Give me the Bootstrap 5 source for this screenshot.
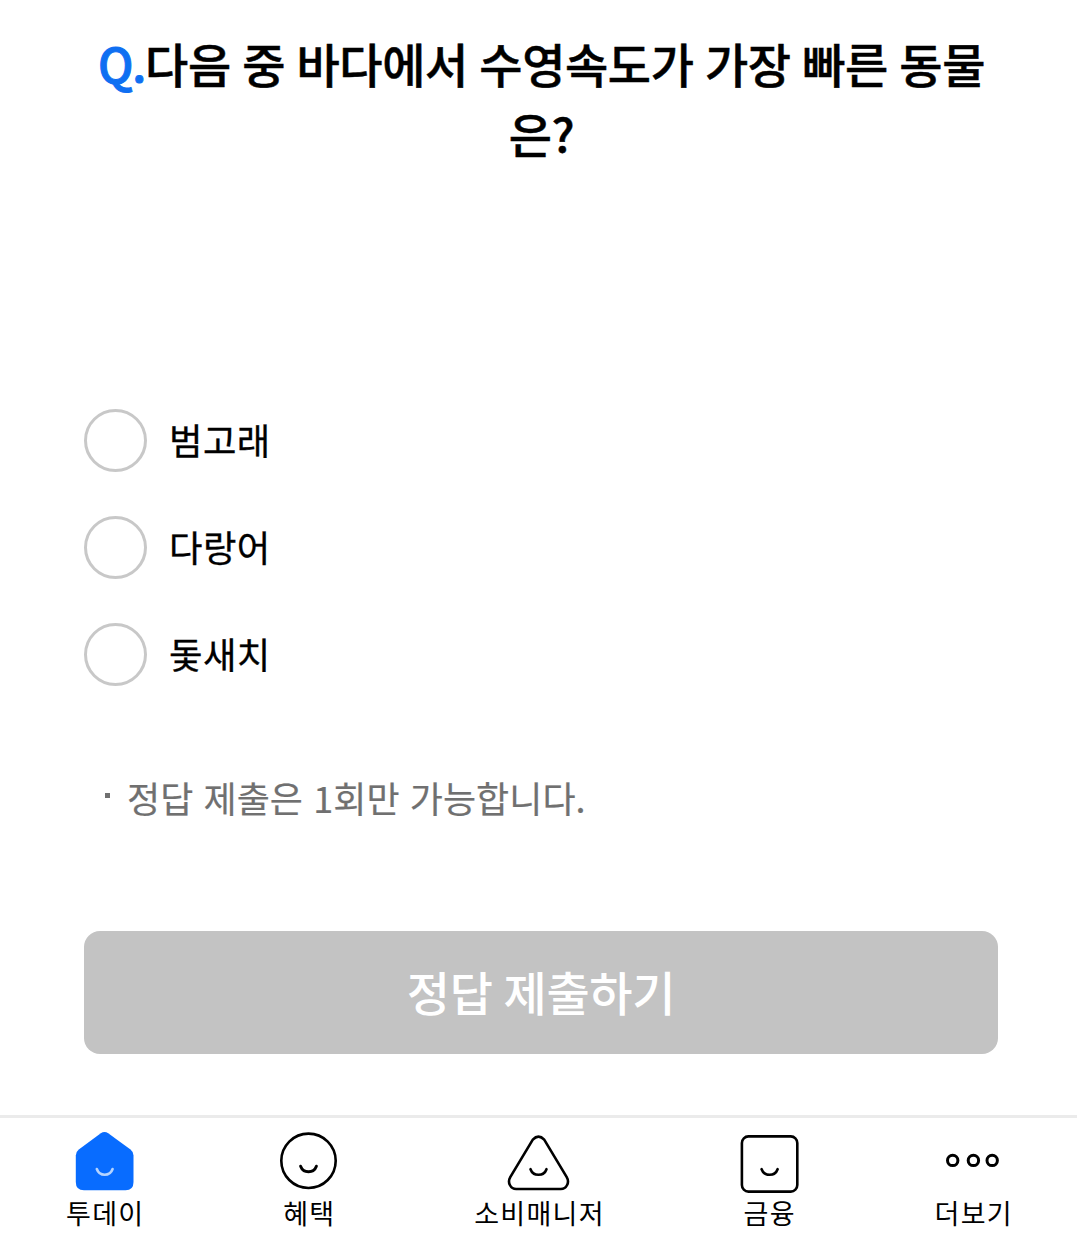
<!DOCTYPE html>
<html lang="ko">
<head>
<meta charset="utf-8">
<meta name="viewport" content="width=device-width, initial-scale=1">
<title>퀴즈</title>
<link href="https://cdn.jsdelivr.net/npm/bootstrap@5.3.0/dist/css/bootstrap.min.css" rel="stylesheet">
<style>
body{font-family:"Noto Sans CJK KR",sans-serif;color:#000;background:#fff;height:1244px;overflow:hidden}
.quiz{height:1115px;padding:28px 79px 0 84px}
.question{font-size:47px;line-height:70px;font-weight:500;letter-spacing:-.4px;word-spacing:-1.3px;height:381px;margin:0;padding-left:1px;word-break:break-all;-webkit-text-stroke:.5px}
.question span{color:#0f6ff2;letter-spacing:-1.2px;-webkit-text-stroke:1px}
.choices{gap:44px}
.choice{height:63px;gap:22px;font-size:36.4px;letter-spacing:.4px}
.choice span{padding-bottom:2px;-webkit-text-stroke:.3px}
.choice .form-check-input{width:63px;height:63px;border:3px solid #c8c8c8}
.notice{font-size:36px;line-height:54px;color:#707070;letter-spacing:.06px;margin:84px 0 0 21px;-webkit-text-stroke:.2px}
.notice::before{content:"";width:5px;height:5px;background:#707070;margin:-4px 17px 0 0}
.submit{height:123px;margin-top:107px;padding:0 0 2px;border-radius:16px;background:#c3c3c3;color:#fff;font-size:47px;font-weight:500;letter-spacing:-.3px;word-spacing:-2px;border:0}
.tabs{height:129px;border-top:3px solid #ebebeb;padding:0 64px 0 66px}
.tab{color:#000;text-decoration:none;font-size:27px;line-height:38px;letter-spacing:1.3px;padding-top:11px;white-space:nowrap}
.tab svg{width:64px;height:66px;margin:0 -8px -1px;flex:none;fill:none;stroke:#000;stroke-width:2.6;stroke-linecap:round;stroke-linejoin:round}
.tab .dots{stroke-width:3}
</style>
</head>
<body class="d-flex flex-column">
<main class="quiz d-flex flex-column">
<h1 class="question text-center"><span>Q.</span>다음 중 바다에서 수영속도가 가장 빠른 동물은?</h1>
<div class="choices d-flex flex-column">
<label class="choice d-flex align-items-center"><input class="form-check-input m-0" type="radio" name="answer"><span>범고래</span></label>
<label class="choice d-flex align-items-center"><input class="form-check-input m-0" type="radio" name="answer"><span>다랑어</span></label>
<label class="choice d-flex align-items-center"><input class="form-check-input m-0" type="radio" name="answer"><span>돛새치</span></label>
</div>
<p class="notice d-flex align-items-center">정답 제출은 1회만 가능합니다.</p>
<button class="submit btn w-100" type="button">정답 제출하기</button>
</main>
<nav class="tabs d-flex justify-content-between">
<a class="tab d-flex flex-column align-items-center" href="#"><svg viewBox="0 0 64 66"><path d="M27.8 4.3Q31.5 1.8 35.2 4.3L57.5 20.5Q60.5 22.8 60.5 26.5V53Q60.5 61.3 52.5 61.3H11Q2.8 61.3 2.8 53V26.5Q2.8 22.8 5.8 20.5Z" fill="#086cff" stroke="none"/><path d="M23.8 40C26.5 47.6 36.9 47.6 39.6 40" stroke="#b5d4ff"/></svg>투데이</a>
<a class="tab d-flex flex-column align-items-center" href="#"><svg viewBox="0 0 64 66"><circle cx="31.5" cy="31.8" r="27.2"/><path d="M23.6 37.2C26.3 44.6 36.7 44.6 39.4 37.2" stroke-width="2.9"/></svg>혜택</a>
<a class="tab d-flex flex-column align-items-center" href="#"><svg viewBox="0 0 64 66"><path d="M25.8 10.6Q31.5 4.6 37.2 10.6L59.6 47.8C63 53.5 59.5 60 53.8 60H9.2C3.5 60 0 53.5 3.4 47.8Z"/><path d="M23.5 40.2C26.2 47.6 36.8 47.6 39.5 40.2"/></svg>소비매니저</a>
<a class="tab d-flex flex-column align-items-center" href="#"><svg viewBox="0 0 64 66"><rect x="3.9" y="7.4" width="55.4" height="55.2" rx="6.5"/><path d="M23.6 40.2C26.3 47.6 36.9 47.6 39.6 40.2"/></svg>금융</a>
<a class="tab d-flex flex-column align-items-center" href="#"><svg class="dots" viewBox="0 0 64 66"><circle cx="10.7" cy="31.4" r="5.2"/><circle cx="31.4" cy="31.4" r="5.2"/><circle cx="50.2" cy="31.4" r="5.2"/></svg>더보기</a>
</nav>
<script src="https://cdn.jsdelivr.net/npm/bootstrap@5.3.0/dist/js/bootstrap.bundle.min.js"></script>
</body>
</html>
